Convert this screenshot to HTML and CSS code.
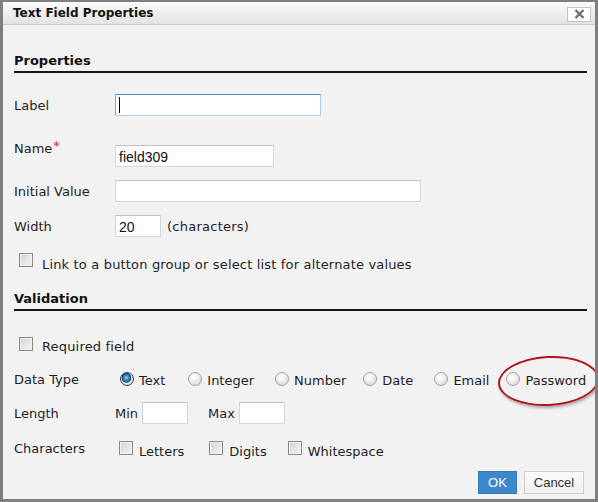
FILE: index.html
```html
<!DOCTYPE html>
<html>
<head>
<meta charset="utf-8">
<title>Text Field Properties</title>
<link rel="stylesheet" href="styles.css">
</head>
<body>
<div class="dialog">
  <div class="titlebar">
    <span class="title">Text Field Properties</span>
    <button class="close" type="button" aria-label="Close">
      <svg width="11" height="10" viewBox="0 0 11 10"><path d="M1.5 1 L9.5 9 M9.5 1 L1.5 9" stroke="#6f6f6f" stroke-width="2.4" fill="none"/></svg>
    </button>
  </div>
  <div class="content">
    <h2 class="section first">Properties</h2>

    <div class="row r-label">
      <span class="lbl">Label</span>
      <span class="field-wrap"><input class="inp focused w-label" type="text"><span class="caret"></span></span>
    </div>
    <div class="row r-name">
      <span class="lbl top">Name<span class="req">*</span></span>
      <input class="inp w-name" type="text" value="field309">
    </div>
    <div class="row r-std">
      <span class="lbl">Initial Value</span>
      <input class="inp w-init" type="text">
    </div>
    <div class="row r-std">
      <span class="lbl">Width</span>
      <input class="inp w-small" type="text" value="20">
      <span class="suffix">(characters)</span>
    </div>
    <div class="row r-check">
      <input class="cb" type="checkbox">
      <span class="cb-text">Link to a button group or select list for alternate values</span>
    </div>

    <h2 class="section second">Validation</h2>

    <div class="row r-check r-req">
      <input class="cb" type="checkbox">
      <span class="cb-text small">Required field</span>
    </div>
    <div class="row r-type">
      <span class="lbl">Data Type</span>
      <div class="options radios">
        <label class="opt"><input class="rb" type="radio" name="dt" checked><span>Text</span></label>
        <label class="opt"><input class="rb" type="radio" name="dt"><span>Integer</span></label>
        <label class="opt"><input class="rb" type="radio" name="dt"><span>Number</span></label>
        <label class="opt"><input class="rb" type="radio" name="dt"><span>Date</span></label>
        <label class="opt"><input class="rb" type="radio" name="dt"><span>Email</span></label>
        <label class="opt pw"><input class="rb" type="radio" name="dt"><span>Password</span><span class="ring"></span></label>
      </div>
    </div>
    <div class="row r-std r-len">
      <span class="lbl">Length</span>
      <span class="mini">Min</span>
      <input class="inp w-len" type="text">
      <span class="mini max">Max</span>
      <input class="inp w-len" type="text">
    </div>
    <div class="row r-chars">
      <span class="lbl">Characters</span>
      <div class="options checks">
        <label class="opt"><input class="cb" type="checkbox"><span>Letters</span></label>
        <label class="opt"><input class="cb" type="checkbox"><span>Digits</span></label>
        <label class="opt"><input class="cb" type="checkbox"><span>Whitespace</span></label>
      </div>
    </div>

    <div class="footer">
      <button class="btn ok" type="button">OK</button>
      <button class="btn cancel" type="button">Cancel</button>
    </div>
  </div>
</div>
</body>
</html>
```

FILE: styles.css
```css
html, body {
  margin: 0;
  padding: 0;
  background: #7f7f7f;
}

.dialog {
  position: relative;
  width: 598px;
  height: 502px;
  box-sizing: border-box;
  border: 3px solid #7f7f7f;
  border-top-width: 2px;
  background: #f2f2f2;
  font-family: "DejaVu Sans", Verdana, sans-serif;
  font-size: 13px;
  line-height: 16px;
  color: #1e1e1e;
  overflow: hidden;
}

.titlebar {
  height: 22px;
  border-bottom: 1px solid #cacaca;
  background: linear-gradient(#fbfbfb, #e3e3e3);
  display: flex;
  align-items: center;
  justify-content: space-between;
  padding-left: 10px;
  padding-right: 4px;
}

.title {
  font-weight: bold;
  font-size: 12px;
  color: #111;
}

.close {
  width: 24px;
  height: 15px;
  margin-top: 2px;
  padding: 0;
  border: 1px solid #c4c4c4;
  background: #fff;
  display: flex;
  align-items: center;
  justify-content: center;
}

.content {
  padding: 0 8px 0 11px;
}

.section {
  margin: 0;
  font-size: 13px;
  line-height: 16px;
  font-weight: bold;
  color: #111;
  padding-top: 1px;
  padding-bottom: 2px;
  border-bottom: 2px solid #161616;
}

.section.first { margin-top: 27px; }
.section.second { margin-top: 18px; }

.row {
  display: flex;
  align-items: center;
}

.lbl {
  width: 101px;
  flex: none;
  padding-top: 1px;
}

.r-label { margin-top: 21px; height: 22px; }
.r-name { margin-top: 29px; height: 22px; align-items: flex-start; }
.r-name .lbl.top { margin-top: -5px; }
.r-std { margin-top: 13px; height: 22px; }

.req {
  color: #e0294a;
  position: relative;
  top: -3px;
  margin-left: 1px;
}

.inp {
  box-sizing: border-box;
  height: 22px;
  margin: 0;
  padding: 1px 3px 0;
  border: 1px solid #d6d6d6;
  border-top-color: #c2c2c2;
  border-radius: 1px;
  background: #fff;
  font-family: "Liberation Sans", Arial, sans-serif;
  font-size: 14px;
  color: #111;
  outline: none;
}

.inp.focused {
  border-color: #a9cdee;
  border-top-color: #4f86bc;
  border-left-color: #7fb0e0;
}

.field-wrap {
  position: relative;
  display: flex;
}

.caret {
  position: absolute;
  left: 4px;
  top: 3px;
  width: 1px;
  height: 16px;
  background: #000;
}

.w-label { width: 206px; }
.w-name { width: 159px; }
.w-init { width: 306px; }
.w-small { width: 46px; }
.w-len { width: 46px; }

.suffix {
  margin-left: 6px;
  padding-top: 1px;
  letter-spacing: 0.25px;
}

.r-check {
  margin-top: 15px;
  height: 20px;
  align-items: flex-start;
}

.cb {
  appearance: none;
  -webkit-appearance: none;
  box-sizing: border-box;
  width: 14px;
  height: 14px;
  margin: 1px 0 0 5px;
  flex: none;
  border: 1px solid #8c8c8c;
  background: linear-gradient(135deg, #d2d2d2, #f6f6f6);
  box-shadow: inset 0 0 0 1px #f0f0f0;
}

.cb-text {
  margin-left: 9px;
  padding-top: 5px;
  letter-spacing: 0.17px;
}

.r-req {
  margin-top: 25px;
  height: 18px;
}

.r-req .cb-text { padding-top: 3px; }

.r-type {
  margin-top: 17px;
  height: 16px;
}

.options {
  display: flex;
  align-items: center;
}

.opt {
  display: flex;
  align-items: center;
  position: relative;
}

.opt span { padding-top: 3px; }

.radios { margin-left: 5px; }
.radios .opt span:first-of-type { margin-left: 5px; }
.radios .opt:nth-child(2) { margin-left: 23px; }
.radios .opt:nth-child(3) { margin-left: 21px; }
.radios .opt:nth-child(4) { margin-left: 17px; }
.radios .opt:nth-child(5) { margin-left: 21px; }
.radios .opt:nth-child(6) { margin-left: 17px; }

.rb {
  appearance: none;
  -webkit-appearance: none;
  box-sizing: border-box;
  width: 14px;
  height: 14px;
  margin: 0;
  flex: none;
  border-radius: 50%;
  border: 1px solid #a3a3a3;
  background: radial-gradient(circle at 40% 35%, #ffffff 0, #f1f1f1 35%, #cfcfcf 100%);
}

.rb:checked {
  border-color: #3c3c3c;
  background: radial-gradient(circle at 45% 40%, #bfe6ff 0, #4ea3e6 1.5px, #1f6bab 3.5px, #12456f 4.5px, #e6e6e6 5.2px, #c9c9c9 100%);
}

.pw .ring {
  position: absolute;
  left: -8px;
  top: -14px;
  width: 97px;
  height: 46px;
  padding: 0;
  border: 2px solid #b0141c;
  border-radius: 50%;
  transform: rotate(-3deg);
  box-shadow: 1px 2px 3px rgba(0, 0, 0, 0.3);
  pointer-events: none;
}

.r-len { margin-top: 15px; }

.mini { margin-right: 4px; padding-top: 1px; }
.mini.max { margin-left: 20px; }

.r-chars {
  margin-top: 16px;
  height: 20px;
  align-items: flex-start;
}

.checks { margin-left: 4px; }
.checks .cb { margin: 1px 0 0 0; }
.checks .opt { align-items: flex-start; }
.checks .opt span { margin-left: 6px; padding-top: 4px; }
.checks .opt:nth-child(2) { margin-left: 25px; }
.checks .opt:nth-child(3) { margin-left: 21px; }

.footer {
  display: flex;
  justify-content: flex-end;
  gap: 7px;
  margin-top: 11px;
  margin-right: 3px;
}

.btn {
  box-sizing: border-box;
  height: 23px;
  margin: 0;
  font-family: "Liberation Sans", Arial, sans-serif;
  font-size: 13px;
  padding: 0;
}

.ok {
  width: 39px;
  border: 1px solid #3478b8;
  background: #3d87cb;
  color: #fff;
}

.cancel {
  width: 60px;
  border: 1px solid #cfcfcf;
  background: linear-gradient(#fbfbfb, #f0f0f0);
  color: #333;
}
```
